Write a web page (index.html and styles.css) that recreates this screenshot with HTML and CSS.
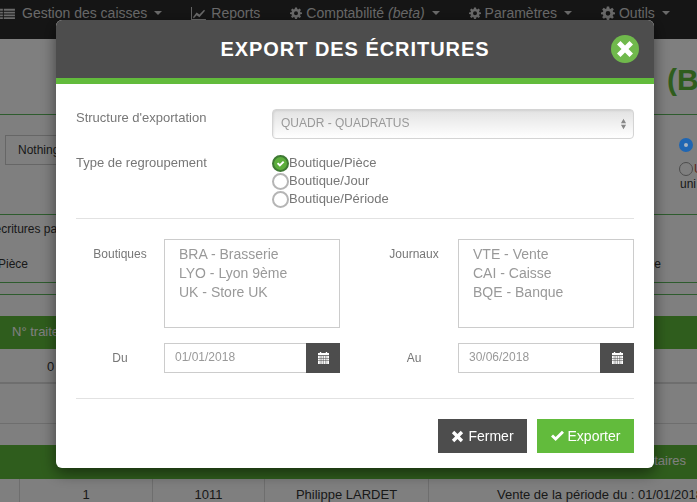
FILE: index.html
```html
<!DOCTYPE html>
<html lang="fr">
<head>
<meta charset="utf-8">
<title>Export des écritures</title>
<link rel="stylesheet" href="styles.css">
</head>
<body>
<div class="page">
  <nav class="navbar">
    <span class="nav-item nav-first"><svg class="nav-ico" viewBox="0 0 16 14"><path d="M0 2h3v2H0zM4 2h12v2H4zM0 5h3v2H0zM4 5h12v2H4zM0 8h3v2H0zM4 8h12v2H4zM0 11h3v2H0zM4 11h12v2H4z"/></svg>Gestion des caisses<i class="caret"></i></span>
    <span class="nav-item nav-reports"><svg class="nav-ico" viewBox="0 0 16 14"><path d="M0 0h1v13h15v1H0z"/><path d="M2 11l4-5 3 2 5-5 1 1-6 7-3-2-3 3z"/></svg>Reports</span>
    <span class="nav-item"><svg class="nav-gear" viewBox="0 0 24 24"><path fill-rule="evenodd" d="M10 1h4l.6 3.2 1.8.8L19.2 3 22 5.800 20 8.600l.8 1.800L24 11v3l-3.200.6-.8 1.800 2 2.800-2.800 2.800-2.800-2-1.800.8L14 24h-4l-.6-3.200-1.800-.8-2.800 2L2 19.200l2-2.800-.8-1.800L0 14v-3l3.200-.6.8-1.800-2-2.800L4.800 3l2.800 2 1.800-.8zM12 8.500a4 4 0 1 0 0 8 4 4 0 0 0 0-8z"/></svg>Comptabilité&nbsp;<em>(beta)</em><i class="caret"></i></span>
    <span class="nav-item"><svg class="nav-gear" viewBox="0 0 24 24"><path fill-rule="evenodd" d="M10 1h4l.6 3.2 1.800.8L19.200 3 22 5.800 20 8.600l.8 1.800L24 11v3l-3.200.6-.8 1.800 2 2.800-2.800 2.800-2.800-2-1.800.8L14 24h-4l-.6-3.200-1.800-.8-2.800 2L2 19.200l2-2.800-.8-1.800L0 14v-3l3.200-.6.8-1.800-2-2.800L4.800 3l2.800 2 1.800-.8zM12 8.500a4 4 0 1 0 0 8 4 4 0 0 0 0-8z"/></svg>Paramètres<i class="caret"></i></span>
    <span class="nav-item"><svg class="nav-gear nav-gear-lg" viewBox="0 0 24 24"><path fill-rule="evenodd" d="M10 1h4l.6 3.2 1.800.8L19.200 3 22 5.800 20 8.600l.8 1.800L24 11v3l-3.200.6-.8 1.800 2 2.800-2.800 2.800-2.800-2-1.800.8L14 24h-4l-.6-3.200-1.800-.8-2.800 2L2 19.200l2-2.800-.8-1.800L0 14v-3l3.200-.6.8-1.800-2-2.800L4.800 3l2.800 2 1.800-.8zM12 8.500a4 4 0 1 0 0 8 4 4 0 0 0 0-8z"/></svg>Outils<i class="caret"></i></span>
  </nav>

  <section class="heading"><h1>(B</h1></section>

  <section class="filters">
    <div class="nothing">Nothing</div>
    <div class="choices">
      <div class="choice"><span class="dot dot-on"></span><span class="choice-t">T</span></div>
      <div class="choice"><span class="dot"></span><span class="choice-t choice-u">U</span></div>
      <span class="uni">uni</span>
    </div>
  </section>

  <section class="criteria">
    <div class="criteria-top">ecritures pa</div>
    <div class="criteria-row"><span>Pièce</span><span>e</span></div>
  </section>
  <div class="thin-band"></div>

  <div class="green-band"><span>N° traite</span></div>
  <div class="row-zero"><span>0</span></div>
  <div class="row-blank"></div>
  <div class="row-blank2"></div>
  <div class="green-band green-band2"><span>taires</span></div>
  <div class="data-row">
    <span class="c0"></span>
    <span class="c1">1</span>
    <span class="c2">1011</span>
    <span class="c3">Philippe LARDET</span>
    <span class="c4">Vente de la période du : 01/01/2018</span>
  </div>
</div>

<div class="backdrop"></div>

<div class="modal">
  <header class="modal-head">
    <h2>EXPORT DES ÉCRITURES</h2>
    <span class="close"><svg viewBox="0 0 20 20"><path d="M5.500 2L10 6.500 14.500 2 18 5.500 13.500 10 18 14.500 14.500 18 10 13.500 5.500 18 2 14.500 6.500 10 2 5.500z"/></svg></span>
  </header>
  <div class="modal-body">
    <div class="line line-select">
      <label class="lab-main lab-select">Structure d'exportation</label>
      <div class="select">QUADR - QUADRATUS<svg class="updown" viewBox="0 0 8 14"><path d="M4 1l3 5H1zM4 13L1 8h6z"/></svg></div>
    </div>
    <div class="line line-radio">
      <label class="lab-main lab-radio">Type de regroupement</label>
      <div class="radios">
        <div class="radio"><span class="rb rb-on"><svg viewBox="0 0 12 12"><path d="M2 6.300l1.500-1.500 1.800 1.800 3.400-3.400 1.500 1.500-4.900 4.900z"/></svg></span>Boutique/Pièce</div>
        <div class="radio"><span class="rb"></span>Boutique/Jour</div>
        <div class="radio"><span class="rb"></span>Boutique/Période</div>
      </div>
    </div>
    <hr class="sep sep-a">
    <div class="cols">
      <div class="col">
        <div class="field field-list">
          <label class="lab-side">Boutiques</label>
          <div class="listbox"><div>BRA - Brasserie</div><div>LYO - Lyon 9ème</div><div>UK - Store UK</div></div>
        </div>
        <div class="field field-date">
          <label class="lab-side lab-date">Du</label>
          <div class="date"><span class="date-val">01/01/2018</span><span class="date-btn"><svg viewBox="0 0 12 13"><path d="M2 0h1.500v1h5V0H10v1h2v2.500H0V1h2zM0 4.300h2v2.200H0zM2.500 4.300h1.500v2.200H2.500zM4.500 4.300h1.300v2.200H4.500zM6.300 4.300h1.300v2.200H6.300zM8.100 4.300h1.500v2.200H8.100zM10 4.300h2v2.200h-2zM0 7h2v2.200H0zM2.500 7h1.500v2.200H2.500zM4.500 7h1.300v2.200H4.500zM6.300 7h1.300v2.200H6.300zM8.100 7h1.500v2.200H8.100zM10 7h2v2.200h-2zM0 9.700h2V13H0zM2.500 9.700h1.500V13H2.500zM4.500 9.700h1.300V13H4.500zM6.300 9.700h1.300V13H6.300zM8.100 9.700h1.500V13H8.100zM10 9.700h2V13h-2z"/></svg></span></div>
        </div>
      </div>
      <div class="col">
        <div class="field field-list">
          <label class="lab-side">Journaux</label>
          <div class="listbox"><div>VTE - Vente</div><div>CAI - Caisse</div><div>BQE - Banque</div></div>
        </div>
        <div class="field field-date">
          <label class="lab-side lab-date">Au</label>
          <div class="date"><span class="date-val">30/06/2018</span><span class="date-btn"><svg viewBox="0 0 12 13"><path d="M2 0h1.500v1h5V0H10v1h2v2.500H0V1h2zM0 4.300h2v2.200H0zM2.500 4.300h1.500v2.200H2.500zM4.500 4.300h1.300v2.200H4.500zM6.300 4.300h1.300v2.200H6.300zM8.100 4.300h1.500v2.200H8.100zM10 4.300h2v2.200h-2zM0 7h2v2.200H0zM2.500 7h1.500v2.200H2.500zM4.500 7h1.300v2.200H4.500zM6.300 7h1.300v2.200H6.300zM8.100 7h1.500v2.200H8.100zM10 7h2v2.200h-2zM0 9.700h2V13H0zM2.500 9.700h1.500V13H2.500zM4.500 9.700h1.300V13H4.500zM6.300 9.700h1.300V13H6.300zM8.100 9.700h1.500V13H8.100zM10 9.700h2V13h-2z"/></svg></span></div>
        </div>
      </div>
    </div>
    <hr class="sep sep-b">
    <div class="actions">
      <button class="btn btn-dark"><svg viewBox="0 0 12 12"><path d="M3 .8L6 3.800 9 .8 11.200 3 8.200 6 11.200 9 9 11.200 6 8.200 3 11.200.8 9 3.800 6 .8 3z"/></svg>Fermer</button>
      <button class="btn btn-green"><svg viewBox="0 0 14 12"><path d="M0 6.500L2.200 4.300 5 7.100 11.800.3 14 2.500 5 11.500z"/></svg>Exporter</button>
    </div>
  </div>
</div>
</body>
</html>
```

FILE: styles.css
```css
* { box-sizing: border-box; }
html, body { margin: 0; height: 100%; overflow: hidden; }
body { font-family: "Liberation Sans", Arial, sans-serif; background: #fff; color: #333; }

.page { width: 697px; height: 502px; overflow: hidden; background: #fff; font-size: 13px; }

.navbar { height: 39px; background: #2b2b2b; color: #d4d4d4; display: flex; align-items: flex-start; font-size: 14px; line-height: 16px; padding-top: 5px; white-space: nowrap; }
.nav-item { display: flex; align-items: center; margin-right: 29px; }
.nav-first { margin-left: 0; margin-right: 29px; }
.nav-reports { margin-right: 30px; }
.nav-item em { font-style: italic; }
.nav-ico { width: 15px; height: 13px; fill: currentColor; margin-right: 7px; flex: none; }
.nav-reports .nav-ico { margin-right: 5px; }
.nav-gear { width: 12px; height: 12px; fill: currentColor; margin-right: 4px; flex: none; }
.nav-gear-lg { width: 14px; height: 14px; }
.caret { display: inline-block; margin-left: 7px; width: 0; height: 0; border-left: 4px solid transparent; border-right: 4px solid transparent; border-top: 4px solid currentColor; }

.heading { height: 76px; border-bottom: 1px solid #5cb85c; display: flex; justify-content: flex-end; align-items: flex-start; }
.heading h1 { margin: 21px 0 0; font-size: 30px; line-height: 40px; font-weight: bold; color: #5fbb3a; width: 30px; white-space: nowrap; overflow: hidden; }

.filters { height: 100px; border-bottom: 1px solid #5cb85c; position: relative; display: flex; justify-content: space-between; padding: 20px 0 0 5px; }
.nothing { width: 60px; height: 30px; border: 1px solid #ccc; line-height: 28px; padding-left: 12px; white-space: nowrap; font-size: 12px; }
.choices { width: 18px; display: flex; flex-direction: column; align-items: flex-start; margin-top: 3px; gap: 10px; }
.choice { display: flex; align-items: center; gap: 1px; height: 14px; font-size: 12px; }
.choice-t { color: #fff; }
.choice-u { color: #c0503c; }
.dot { width: 14px; height: 14px; border-radius: 50%; border: 1px solid #999; background: #fff; flex: none; }
.dot-on { position: relative; z-index: 1; background: #a9b4c0; border: 5px solid #1f66b3; }
.uni { margin: -9px 0 0 1px; font-size: 12px; }

.criteria { height: 68px; border-bottom: 1px solid #5cb85c; font-size: 12px; }
.criteria-top { height: 29px; padding-top: 7px; margin-left: -5.500px; white-space: nowrap; }
.criteria-row { display: flex; justify-content: space-between; padding-top: 13px; margin-left: -2px; }
.criteria-row span:last-child { margin-right: 36px; }
.thin-band { height: 12px; border-bottom: 1px solid #5cb85c; }

.green-band { height: 33px; margin-top: 21px; background: #5fbb3a; color: #fff; padding-left: 12px; line-height: 32px; }
.row-zero { height: 35px; border-bottom: 2px solid #ddd; padding-left: 47px; line-height: 35px; }
.row-blank { height: 40px; border-bottom: 1px solid #ddd; }
.row-blank2 { height: 21px; }
.green-band2 { margin-top: 0; height: 34px; display: flex; justify-content: flex-end; padding: 0 11px 0 0; }
.data-row { height: 23px; display: flex; line-height: 32px; font-size: 13px; text-align: center; white-space: nowrap; }
.data-row span { border-right: 1px solid #ddd; display: block; flex: none; }
.c0 { width: 20px; }
.c1 { width: 133px; }
.c2 { width: 112px; }
.c3 { width: 164px; }
.c4 { width: 268px; padding-left: 68px; text-align: left; border-right: 0 !important; overflow: hidden; }

.backdrop { position: fixed; inset: 0; background: rgba(0,0,0,.5); }

.modal { position: fixed; z-index: 2; left: 56px; top: 20px; width: 598px; height: 448px; background: #fff; border-radius: 6px; box-shadow: 0 5px 15px rgba(0,0,0,.5); color: #777; overflow: hidden; }
.modal-head { height: 64px; background: #4d4d4d; border-bottom: 6px solid #62bb3c; display: flex; align-items: center; justify-content: center; position: relative; }
.modal-head h2 { margin: 0; color: #fff; font-size: 20px; font-weight: bold; letter-spacing: .95px; line-height: 58px; }
.close { position: absolute; right: 15px; top: 15px; width: 28px; height: 28px; border-radius: 50%; background: #70b94c; display: flex; align-items: center; justify-content: center; }
.close svg { width: 20px; height: 20px; fill: #fff; }

.modal-body { padding: 25px 20px 0; font-size: 13px; }
.line { display: flex; }
.lab-main { width: 196px; flex: none; font-size: 13px; line-height: 16px; }
.lab-select { padding-top: 1px; }
.line-select { height: 30px; }
.select { flex: 1; height: 30px; border: 1px solid #d4d4d4; border-radius: 4px; background: linear-gradient(#e2e2e2, #fff); font-size: 12px; line-height: 27px; padding-left: 8px; color: #999; position: relative; box-shadow: inset 1px 1px 2px rgba(0,0,0,.08); }
.updown { position: absolute; right: 6px; top: 8px; width: 7px; height: 12px; fill: #888; }
.line-radio { margin-top: 15px; }
.lab-radio { padding-top: 1px; }
.radios { display: flex; flex-direction: column; }
.radio { display: flex; align-items: center; height: 18px; line-height: 18px; white-space: nowrap; }
.rb { width: 17px; height: 17px; border: 2px solid #b5b5b5; border-radius: 50%; background: #fff; flex: none; display: flex; align-items: center; justify-content: center; }
.rb-on { background: #5cae3c; border-color: #3f7a34; }
.rb svg { width: 11px; height: 11px; fill: #fff; }

.sep { border: 0; border-top: 1px solid #e2e2e2; margin: 0; }
.sep-a { margin-top: 10px; }
.sep-b { margin-top: 25px; }

.cols { display: flex; justify-content: space-between; padding-top: 20px; }
.col { width: 264px; }
.field { display: flex; }
.lab-side { width: 88px; flex: none; text-align: center; font-size: 12px; padding-top: 8px; line-height: 14px; }
.lab-date { padding-top: 8px; }
.listbox { width: 176px; height: 89px; border: 1px solid #ccc; padding: 5px 14px; font-size: 14px; line-height: 19px; color: #999; }
.field-date { margin-top: 15px; }
.date { width: 176px; height: 30px; display: flex; }
.date-val { flex: 1; border: 1px solid #ccc; border-right: 0; font-size: 12px; line-height: 26px; padding-left: 10px; color: #999; }
.date-btn { width: 34px; background: #4d4d4d; display: flex; align-items: center; justify-content: center; }
.date-btn svg { width: 11px; height: 12px; fill: #fff; }

.actions { display: flex; justify-content: flex-end; gap: 10px; margin-top: 20px; }
.btn { height: 34px; border: 0; color: #fff; font-family: inherit; font-size: 14px; display: flex; align-items: center; justify-content: center; padding: 0; }
.btn svg { fill: #fff; flex: none; }
.btn-dark { width: 89px; background: #4d4d4d; }
.btn-dark svg { width: 13px; height: 13px; margin-right: 4px; }
.btn-green { width: 97px; background: #62bb3c; }
.btn-green svg { width: 13px; height: 12px; margin-right: 4px; }
```
